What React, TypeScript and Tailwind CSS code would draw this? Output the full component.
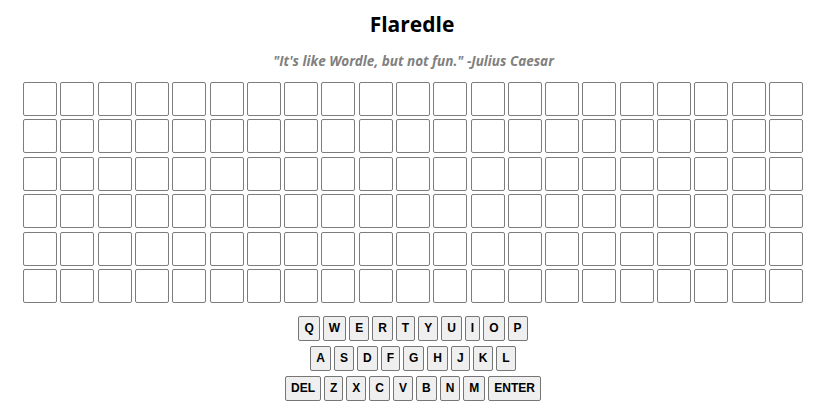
const ROWS = 6;
const COLS = 21;

const KEY_ROWS = [
  ['Q', 'W', 'E', 'R', 'T', 'Y', 'U', 'I', 'O', 'P'],
  ['A', 'S', 'D', 'F', 'G', 'H', 'J', 'K', 'L'],
  ['DEL', 'Z', 'X', 'C', 'V', 'B', 'N', 'M', 'ENTER'],
];

function Board() {
  const cells = Array.from({ length: ROWS * COLS });
  return (
    <div className="grid grid-cols-[repeat(21,34px)] gap-x-[3.3px] gap-y-[3.4px] justify-center pl-[2px]">
      {cells.map((_, i) => (
        <div key={i} className="h-[34px] w-[34px] rounded-[2px] border border-[#7d7d7d] bg-white" />
      ))}
    </div>
  );
}

function Keyboard() {
  return (
    <div className="mt-[13px] flex flex-col items-center gap-[5px] pl-[2px]">
      {KEY_ROWS.map((row, r) => (
        <div key={r} className="flex gap-[3px]">
          {row.map((k) => (
            <button
              key={k}
              className="h-[25px] rounded-[2px] border border-[#767676] bg-[#efefef] px-[5px] font-['Liberation_Sans',Arial,sans-serif] text-[12px] font-bold leading-none text-black"
            >
              {k}
            </button>
          ))}
        </div>
      ))}
    </div>
  );
}

export default function App() {
  return (
    <div className="min-h-[418px] w-full bg-white font-['Open_Sans','Noto_Sans',sans-serif]">
      <h1 className="pt-[9px] text-center text-[21px] font-bold leading-[30px] text-black">Flaredle</h1>
      <p className="mt-[13px] pl-[3px] text-center text-[13.5px] font-bold italic leading-[18px] text-[#808080]">
        "It's like Wordle, but not fun." -Julius Caesar
      </p>
      <div className="mt-[12px]">
        <Board />
      </div>
      <Keyboard />
    </div>
  );
}
